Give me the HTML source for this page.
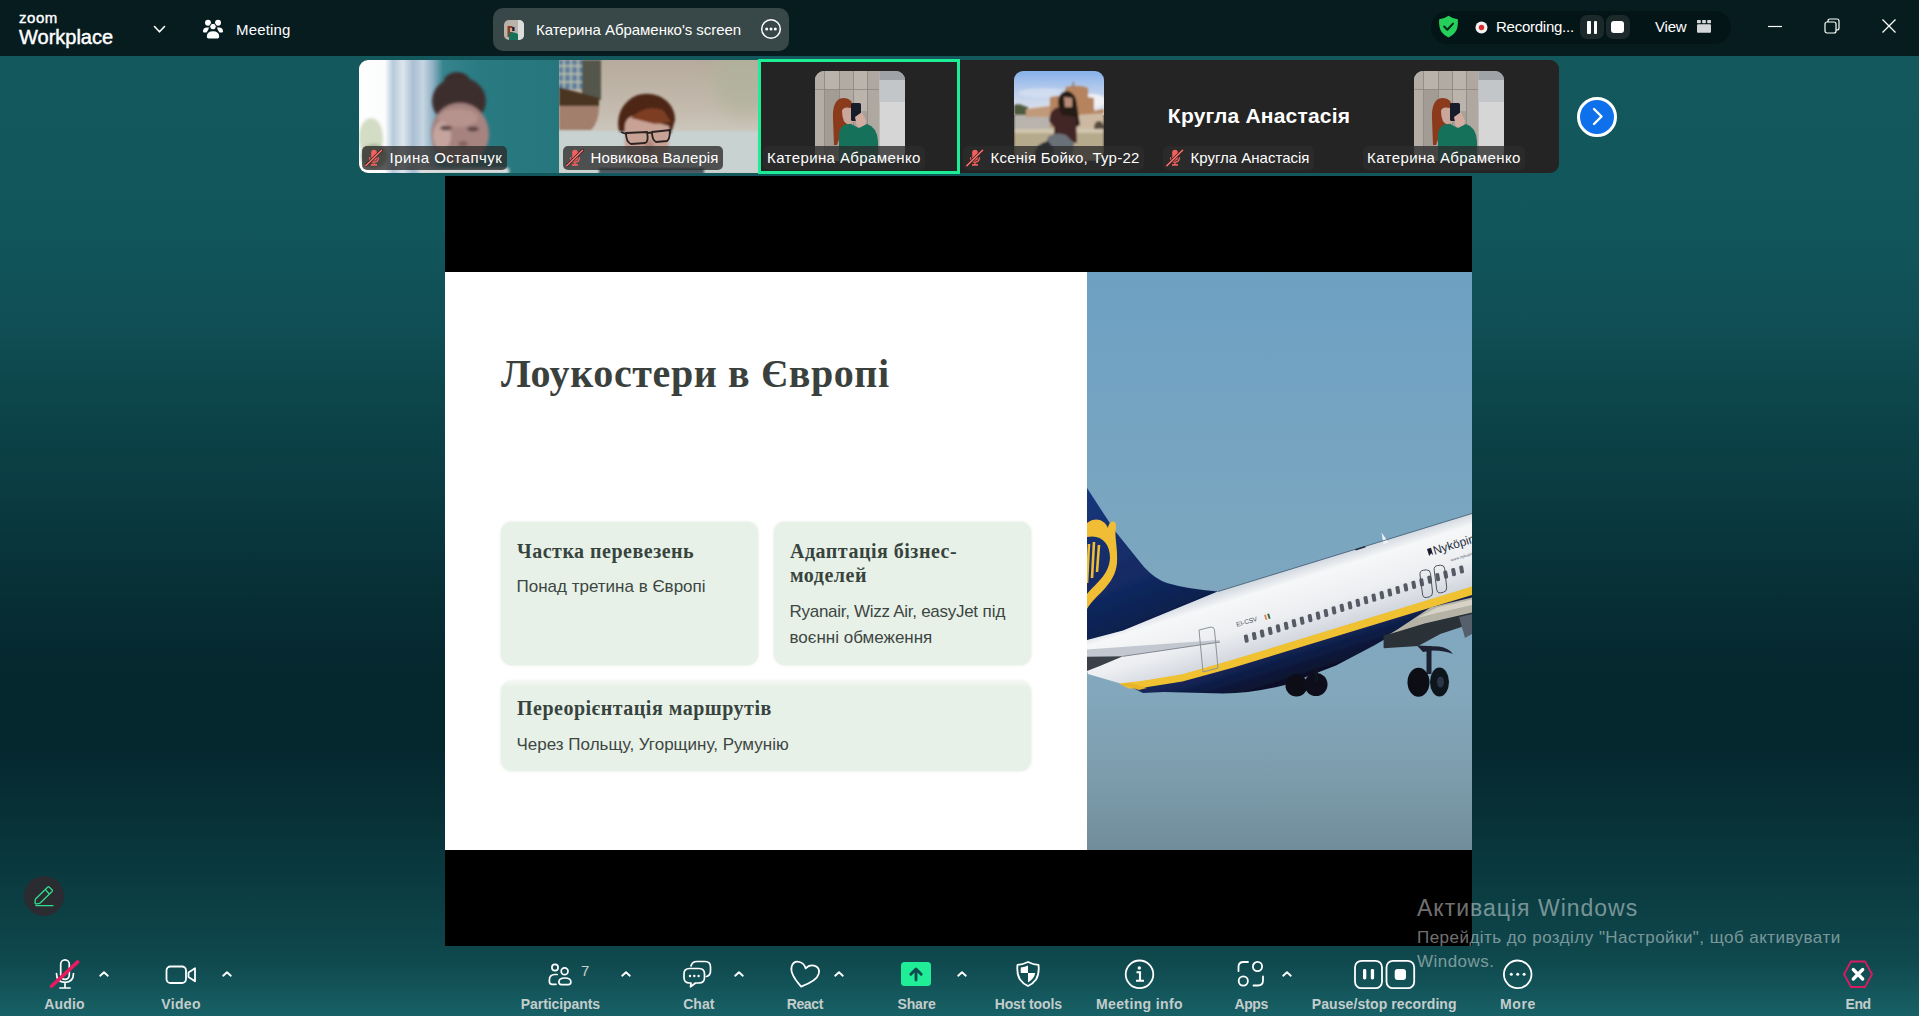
<!DOCTYPE html>
<html lang="uk">
<head>
<meta charset="utf-8">
<title>Zoom Meeting</title>
<style>
*{box-sizing:border-box;margin:0;padding:0}
html,body{width:1919px;height:1016px;overflow:hidden}
body{position:relative;font-family:"Liberation Sans",sans-serif;color:#fff;
 background:linear-gradient(180deg,#12585c 56px,#11565b 230px,#0f4e54 330px,#0c4449 410px,#0a3c42 490px,#083239 565px,#062a31 640px,#05272e 690px,#05282f 750px,#073036 810px,#09393e 870px,#0f484d 960px,#176166 1016px);}
.abs{position:absolute}
/* top bar */
#topbar{position:absolute;left:0;top:0;width:1919px;height:56px;background:#061c1f}
#topbar .t{position:absolute;white-space:nowrap;color:#fff}
/* tiles */
.tile{position:absolute;top:60px;width:200px;height:113px;background:#242424;overflow:hidden}
.lbl{position:absolute;left:4px;top:86px;height:24px;border-radius:5px;background:rgba(44,44,44,.78);color:#fff;font-size:15px;line-height:24px;white-space:nowrap;padding:0 4.5px 0 4px}
.lbl.m{padding-left:27.5px}
.lbl svg{position:absolute;left:3px;top:3px}
.av{position:absolute;left:55px;top:11px;width:90px;height:90px;border-radius:9px;overflow:hidden}
/* share */
#share{position:absolute;left:445px;top:176px;width:1027px;height:770px;background:#000}
#slide{position:absolute;left:0;top:96px;width:642px;height:578px;background:#fff}
#photo{position:absolute;left:642px;top:96px;width:385px;height:578px;overflow:hidden}
.card{position:absolute;background:#e8f1e8;border-radius:11px;box-shadow:0 0 3px rgba(120,150,120,.25)}
.card h3{position:absolute;left:16px;font:bold 20px/24.6px "Liberation Serif",serif;color:#37443e;letter-spacing:.5px;white-space:nowrap}
.card p{position:absolute;left:15.5px;font:17px/25.6px "Liberation Sans",sans-serif;color:#3c4642;white-space:nowrap}
/* toolbar */
.tb{position:absolute;top:995.7px;font-size:14px;font-weight:bold;line-height:16px;color:#c4cccc;white-space:nowrap;transform:translateX(-50%)}
.ico{position:absolute;overflow:visible}
.wm{position:absolute;white-space:nowrap;color:rgba(255,255,255,.46)}
</style>
</head>
<body>

<!-- ===== shared screen ===== -->
<div id="share">
  <div id="slide">
    <div class="abs" id="title" style="left:56px;top:79px;font:bold 40px/46px 'Liberation Serif',serif;color:#3a413d;letter-spacing:.62px;white-space:nowrap">Лоукостери в Європі</div>
    <div class="card" style="left:56px;top:250px;width:257px;height:143px">
      <h3 style="top:16.5px">Частка перевезень</h3>
      <p style="top:52px">Понад третина в Європі</p>
    </div>
    <div class="card" style="left:329px;top:250px;width:257px;height:143px">
      <h3 style="top:16.5px">Адаптація бізнес-<br>моделей</h3>
      <p style="top:77px"><span style="letter-spacing:-.28px">Ryanair, Wizz Air, easyJet</span> під<br>воєнні обмеження</p>
    </div>
    <div class="card" style="left:56px;top:409px;width:530px;height:90px;background:linear-gradient(#f3f8f3 0,#e8f1e8 6px)">
      <h3 style="top:15px">Переорієнтація маршрутів</h3>
      <p style="top:50.5px">Через Польщу, Угорщину, Румунію</p>
    </div>
  </div>
  <div id="photo"><svg width="385" height="578" viewBox="0 0 385 578" style="display:block">
<defs>
<linearGradient id="sky" x1="0" y1="0" x2="0" y2="1">
<stop offset="0" stop-color="#6da0c2"/><stop offset=".33" stop-color="#77a5c1"/><stop offset=".72" stop-color="#83a8bd"/><stop offset=".88" stop-color="#7c9cab"/><stop offset="1" stop-color="#718c9a"/>
</linearGradient>
<linearGradient id="fus" gradientUnits="userSpaceOnUse" x1="250" y1="282" x2="272" y2="352">
<stop offset="0" stop-color="#cfd6de"/><stop offset=".18" stop-color="#f6f7f8"/><stop offset=".6" stop-color="#eceef1"/><stop offset="1" stop-color="#cfd3db"/>
</linearGradient>
<linearGradient id="belly" gradientUnits="userSpaceOnUse" x1="250" y1="360" x2="262" y2="398">
<stop offset="0" stop-color="#142659"/><stop offset="1" stop-color="#050a1c"/>
</linearGradient>
<linearGradient id="fin" gradientUnits="userSpaceOnUse" x1="0" y1="220" x2="60" y2="370">
<stop offset="0" stop-color="#17377c"/><stop offset=".6" stop-color="#122a63"/><stop offset="1" stop-color="#0b1a42"/>
</linearGradient>
<filter id="soft"><feGaussianBlur stdDeviation=".6"/></filter>
</defs>
<rect width="385" height="578" fill="url(#sky)"/>
<g filter="url(#soft)">
<!-- fin -->
<path d="M0,216 L28,259 L57,295 Q68,307 80,311 Q100,317 131,319.5 L36,359 L0,369 Z" fill="url(#fin)"/>
<!-- harp -->
<path d="M0,251 C8,245 17,247 21,256 C22,248 30,247 29,256 C27,263 31,276 30,291 C28,313 9,322 0,337 L0,322 C9,311 22,303 23,286 C23,271 14,262 0,265 Z" fill="#f0bd35"/>
<path d="M2,272 L0,311 M7,270 L5,306 M12,273 L10,300" stroke="#f0bd35" stroke-width="2.6" fill="none"/>
<!-- stabilizer -->

<!-- fuselage -->
<path d="M0,368 L36,358.600 L131,319.500 L385,241.500 L385,315 L146.600,388 L95.400,402.700 L54.400,409.600 L35,412 L1,402 L0,399 Z" fill="url(#fus)"/>
<path d="M0,377.500 L132,368 L133,370 L36,384.500 L0,385 Z" fill="#c3c8d0"/><path d="M0,384.800 L36,384.300 L14,393.500 L0,399 Z" fill="#3a3f48"/>
<path d="M36,384.300 L133,370" stroke="#7a808a" stroke-width=".9"/>
<!-- belly -->
<path d="M40,413 L54.400,414 L146.600,393 L385,320 L385,330 L338,343 L300,366 L287,373.500 L249,393.500 L198,413 Q165,421.500 136,421.500 L77,420 L56,421 Z" fill="url(#belly)"/>
<!-- stripe -->
<path d="M32,411.500 L54.400,409 L95.400,402.200 L146.600,387.500 L385,314.500 L385,323 L146.600,395.500 L95.400,409.600 L54.400,416 L42,416.500 Z" fill="#f0c232"/>
<path d="M33,412 L52,418 L60,416 L44,411 Z" fill="#e8b52c"/>
<!-- wing -->
<path d="M296.600,363.600 L337.500,351 L385,340 L385,351.500 L353.300,362 L331.200,374 L296.600,376.200 Z" fill="#2b3039"/><path d="M302.900,362 L310.700,357.300 L343.800,335.300 L385,325.500 L385,340.500 L337.500,351.500 Z" fill="#b5b2a6"/>
<path d="M330,346 L350,335.500 L385,327.500 L385,333 L350,341 Z" fill="#d6d3c6"/><path d="M372,345 L385,342 L385,362 L378,366 Z" fill="#56606c"/>
<!-- gear -->
<path d="M339.500,374 L344.500,374 L344.500,402 L339.500,402 Z M330,373.500 L352,374.500 Q362,376 366,382 Q358,378.500 346,378.500 L336,380 Z" fill="#1a2030"/>
<circle cx="209.5" cy="413.5" r="11" fill="#0c0f17"/><circle cx="229" cy="412.5" r="11.5" fill="#0e111a"/>
<path d="M228,396 L231,396 L231,410 L228,410 Z" fill="#10131c"/>
<ellipse cx="331.500" cy="410.300" rx="11" ry="14.500" fill="#0b0e15"/><ellipse cx="352.500" cy="410" rx="9.500" ry="14.500" fill="#11151f"/><ellipse cx="353.500" cy="410" rx="3.500" ry="5.500" fill="#2c3446"/>
</g>
<!-- windows -->
<g fill="#555a64">
<rect x="157.3" y="362.6" width="4" height="8" rx="1.4" transform="rotate(-10 159.3 366.6)"/>
<rect x="165.3" y="360.0" width="4" height="8" rx="1.4" transform="rotate(-10 167.3 364.0)"/>
<rect x="173.2" y="357.5" width="4" height="8" rx="1.4" transform="rotate(-10 175.2 361.5)"/>
<rect x="181.2" y="354.9" width="4" height="8" rx="1.4" transform="rotate(-10 183.2 358.9)"/>
<rect x="189.2" y="352.4" width="4" height="8" rx="1.4" transform="rotate(-10 191.2 356.4)"/>
<rect x="197.2" y="349.8" width="4" height="8" rx="1.4" transform="rotate(-10 199.2 353.8)"/>
<rect x="205.1" y="347.2" width="4" height="8" rx="1.4" transform="rotate(-10 207.1 351.2)"/>
<rect x="213.1" y="344.7" width="4" height="8" rx="1.4" transform="rotate(-10 215.1 348.7)"/>
<rect x="221.1" y="342.1" width="4" height="8" rx="1.4" transform="rotate(-10 223.1 346.1)"/>
<rect x="229.1" y="339.6" width="4" height="8" rx="1.4" transform="rotate(-10 231.1 343.6)"/>
<rect x="237.0" y="337.0" width="4" height="8" rx="1.4" transform="rotate(-10 239.0 341.0)"/>
<rect x="245.0" y="334.4" width="4" height="8" rx="1.4" transform="rotate(-10 247.0 338.4)"/>
<rect x="253.0" y="331.9" width="4" height="8" rx="1.4" transform="rotate(-10 255.0 335.9)"/>
<rect x="261.0" y="329.3" width="4" height="8" rx="1.4" transform="rotate(-10 263.0 333.3)"/>
<rect x="268.9" y="326.8" width="4" height="8" rx="1.4" transform="rotate(-10 270.9 330.8)"/>
<rect x="276.9" y="324.2" width="4" height="8" rx="1.4" transform="rotate(-10 278.9 328.2)"/>
<rect x="284.9" y="321.7" width="4" height="8" rx="1.4" transform="rotate(-10 286.9 325.7)"/>
<rect x="292.9" y="319.1" width="4" height="8" rx="1.4" transform="rotate(-10 294.9 323.1)"/>
<rect x="300.8" y="316.5" width="4" height="8" rx="1.4" transform="rotate(-10 302.8 320.5)"/>
<rect x="308.8" y="314.0" width="4" height="8" rx="1.4" transform="rotate(-10 310.8 318.0)"/>
<rect x="316.8" y="311.4" width="4" height="8" rx="1.4" transform="rotate(-10 318.8 315.4)"/>
<rect x="324.8" y="308.9" width="4" height="8" rx="1.4" transform="rotate(-10 326.8 312.9)"/>
<rect x="332.7" y="306.3" width="4" height="8" rx="1.4" transform="rotate(-10 334.7 310.3)"/>
<rect x="340.7" y="303.7" width="4" height="8" rx="1.4" transform="rotate(-10 342.7 307.7)"/>
<rect x="348.7" y="301.2" width="4" height="8" rx="1.4" transform="rotate(-10 350.7 305.2)"/>
<rect x="356.7" y="298.6" width="4" height="8" rx="1.4" transform="rotate(-10 358.7 302.6)"/>
<rect x="364.6" y="296.1" width="4" height="8" rx="1.4" transform="rotate(-10 366.6 300.1)"/>
<rect x="372.6" y="293.5" width="4" height="8" rx="1.4" transform="rotate(-10 374.6 297.5)"/>
</g>
<!-- doors -->
<path d="M112,358 L124,355 Q127,355 127.5,358 L131,396 L116,400 Z" fill="none" stroke="#8d929b" stroke-width="1"/>
<path d="M333,303 Q332.500,298.700 336.500,298.200 L339.500,297.900 Q343,297.700 343.500,301.500 L345.500,320 Q345.800,324 342.500,324.800 L339.500,325.500 Q336,326 335.500,322 Z M347.200,298.300 Q346.700,294 350.700,293.500 L353.700,293.200 Q357.200,293 357.700,296.800 L359.700,315.300 Q360,319.300 356.700,320.100 L353.700,320.800 Q350.200,321.300 349.700,317.300 Z" fill="none" stroke="#4d525d" stroke-width="1"/>
<path d="M294.500,260.500 L301.500,270.500 L296.500,272.200 Z" fill="#eef2f6"/><path d="M131,319.500 L385,241.500" stroke="#3f5870" stroke-width=".8" fill="none"/><path d="M268,277.200 l10,-3.100 l.8,1.200 l-10,3.200z" fill="#1c2a3a"/>
<g font-family="'Liberation Sans',sans-serif" fill="#4a4f5a">
<text x="150" y="355" font-size="6.5" transform="rotate(-17 150 355)">EI-CSV</text>
<text x="347.500" y="282.700" font-size="12" fill="#262d3d" transform="rotate(-17 347.500 282.700)">Nyköping</text><text x="364" y="289.500" font-size="4" fill="#5a6070" transform="rotate(-17 364 289.500)">www.nykoping.se</text><path d="M340,277 l4,-1.300 l2.200,7.500 l-2,-2 l-2,2.800z" fill="#161c30"/>
</g>
<path d="M177,343 l1.8,-.6 l1.6,5 l-1.8,.6z" fill="#e08a4a"/><path d="M180.2,342 l1.8,-.6 l1.6,5 l-1.8,.6z" fill="#2d6a4a"/>
</svg>
</div>
</div>

<!-- ===== top bar ===== -->
<div id="topbar">  <div class="t" style="left:19px;top:10px;font:15px/16px 'Liberation Sans',sans-serif;letter-spacing:.55px;-webkit-text-stroke:.4px #fff">zoom</div>
  <div class="t" style="left:19px;top:24.7px;font:20px/24px 'Liberation Sans',sans-serif;-webkit-text-stroke:.45px #fff">Workplace</div>
  <svg class="ico" style="left:152.7px;top:25.3px" width="13" height="9" viewBox="0 0 13 9"><path d="M1.5,1.5 L6.5,6.8 L11.5,1.5" fill="none" stroke="#fff" stroke-width="1.6" stroke-linecap="round" stroke-linejoin="round"/></svg>
  <svg class="ico" style="left:202px;top:18px" width="22" height="22" viewBox="0 0 22 22" fill="#fff">
    <circle cx="6" cy="4.8" r="3"/><circle cx="16" cy="4.8" r="3"/><circle cx="11" cy="8.6" r="3.3" stroke="#061c1f" stroke-width="1"/>
    <path d="M1,13.5 Q1,9.5 5,9.5 L7,9.5 Q6.5,12 4.5,14.5 L2,14.5 Q1,14.5 1,13.5Z M21,13.5 Q21,9.5 17,9.5 L15,9.5 Q15.500,12 17.5,14.5 L20,14.500 Q21,14.5 21,13.500Z"/>
    <path d="M4.8,18.800 Q4.800,13.300 11,13.300 Q17.200,13.300 17.200,18.800 Q17.200,20.500 15.500,20.500 L6.500,20.500 Q4.800,20.500 4.800,18.800Z"/>
  </svg>
  <div class="t" style="left:236px;top:20.5px;font:15px/18px 'Liberation Sans',sans-serif;letter-spacing:.15px">Meeting</div>

  <div class="abs" style="left:493px;top:8px;width:296px;height:43px;border-radius:10px;background:#384848"></div>
  <svg class="ico" style="left:504px;top:20px" width="20" height="20" viewBox="0 0 20 20"><defs><clipPath id="avc"><rect width="20" height="20" rx="5"/></clipPath></defs><g clip-path="url(#avc)"><rect width="20" height="20" fill="#b9b2aa"/><rect x="14" width="6" height="20" fill="#dcdcdc"/><rect x="3.500" y="6" width="5" height="11" fill="#8a3c1e"/><rect x="6" y="8" width="3.500" height="4" fill="#c9a59a"/><rect x="8.200" y="7" width="2.300" height="4" fill="#151a2c"/><path d="M5,20 L5,13 Q9,11 14,14 L14,20Z" fill="#17705a"/></g></svg>
  <div class="t" id="scr" style="left:536px;top:20.700px;font:15px/18px 'Liberation Sans',sans-serif;letter-spacing:-.04px">Катерина Абраменко's screen</div>
  <svg class="ico" style="left:760px;top:18px" width="22" height="22" viewBox="0 0 22 22"><circle cx="11" cy="11" r="9.3" fill="none" stroke="#fff" stroke-width="1.500"/><circle cx="6.700" cy="11" r="1.500" fill="#fff"/><circle cx="11" cy="11" r="1.500" fill="#fff"/><circle cx="15.300" cy="11" r="1.500" fill="#fff"/></svg>

  <div class="abs" style="left:1431px;top:11px;width:300px;height:33px;border-radius:16.500px;background:#041517"></div>
  <svg class="ico" style="left:1438px;top:15px" width="21" height="23" viewBox="0 0 21 23"><path d="M10.500,0.800 Q14,3.600 19.800,4.200 Q20.600,13 17,17.500 Q14.500,20.800 10.500,22.500 Q6.500,20.800 4,17.500 Q0.400,13 1.200,4.200 Q7,3.600 10.500,0.800Z" fill="#25d05a"/><path d="M6.200,11.600 L9.300,14.700 L15,8.600" fill="none" stroke="#0b2a1c" stroke-width="2.100" stroke-linecap="round" stroke-linejoin="round"/></svg>
  <svg class="ico" style="left:1474.700px;top:20.500px" width="13" height="13" viewBox="0 0 13 13"><circle cx="6.500" cy="6.500" r="6" fill="#f3f3f3"/><circle cx="6.500" cy="6.500" r="2.700" fill="#dc2c2c"/></svg>
  <div class="t" style="left:1496px;top:17.8px;font:15px/18px 'Liberation Sans',sans-serif;letter-spacing:-.25px">Recording...</div>
  <div class="abs" style="left:1580px;top:15px;width:24px;height:24px;border-radius:7px;background:#1c292b"></div>
  <div class="abs" style="left:1587px;top:20.500px;width:3.500px;height:13.500px;border-radius:1px;background:#fff"></div>
  <div class="abs" style="left:1593.500px;top:20.500px;width:3.500px;height:13.500px;border-radius:1px;background:#fff"></div>
  <div class="abs" style="left:1605.500px;top:15px;width:24px;height:24px;border-radius:7px;background:#1c292b"></div>
  <div class="abs" style="left:1611px;top:20.500px;width:12.500px;height:12.500px;border-radius:3px;background:#fff"></div>
  <div class="t" style="left:1655px;top:17.8px;font:15px/18px 'Liberation Sans',sans-serif;letter-spacing:-.2px">View</div>
  <svg class="ico" style="left:1696.500px;top:20px" width="14" height="13" viewBox="0 0 14 13" fill="#d3d6d6"><rect x="0" y="0" width="3.800" height="3.200" rx=".6"/><rect x="5.100" y="0" width="3.800" height="3.200" rx=".6"/><rect x="10.200" y="0" width="3.800" height="3.200" rx=".6"/><rect x="0" y="4.300" width="14" height="8.500" rx="1"/></svg>

  <svg class="ico" style="left:1767px;top:18px" width="16" height="16" viewBox="0 0 16 16"><path d="M1,8.500 L15,8.500" stroke="#fff" stroke-width="1.200"/></svg>
  <svg class="ico" style="left:1824px;top:18px" width="16" height="16" viewBox="0 0 16 16" fill="none" stroke="#fff" stroke-width="1.200"><rect x="1" y="4" width="11" height="11" rx="2"/><path d="M4,4 L4,3 Q4,1 6,1 L13,1 Q15,1 15,3 L15,10 Q15,12 13,12 L12,12"/></svg>
  <svg class="ico" style="left:1881px;top:18px" width="16" height="16" viewBox="0 0 16 16"><path d="M1.500,1.500 L14.500,14.500 M14.500,1.500 L1.500,14.500" stroke="#fff" stroke-width="1.300"/></svg>
</div>

<!-- ===== tiles ===== -->
<svg width="0" height="0" style="position:absolute"><defs>
<filter id="b1" x="-10%" y="-10%" width="120%" height="120%"><feGaussianBlur stdDeviation="1.6"/></filter>
<filter id="b2" x="-10%" y="-10%" width="120%" height="120%"><feGaussianBlur stdDeviation=".9"/></filter>
<filter id="b4" x="-50%" y="-50%" width="200%" height="200%"><feGaussianBlur stdDeviation="9"/></filter>
<filter id="b3" x="-10%" y="-10%" width="120%" height="120%"><feGaussianBlur stdDeviation=".5"/></filter>
<symbol id="micoff" viewBox="0 0 18 18"><rect x="6.200" y=".800" width="5.600" height="11" rx="2.800" fill="#f0605d"/><path d="M4.600,8.600 Q4.600,13.300 9,13.300 Q13.400,13.300 13.400,8.600 M9,13 L9,15.400" fill="none" stroke="#f0605d" stroke-width="1.300" stroke-linecap="round"/><path d="M6,15.900 L12,15.900" stroke="#f0605d" stroke-width="1.700"/><path d="M.8,16.800 L16.600,1.200" stroke="#4a1d1d" stroke-width="3" stroke-linecap="round"/><path d="M.8,16.800 L16.600,1.200" stroke="#f47f7b" stroke-width="1.300" stroke-linecap="round"/></symbol>
<symbol id="selfie" viewBox="0 0 90 90">
 <rect width="90" height="90" fill="#aaa39b"/>
 <g filter="url(#b3)">
 <rect x="0" y="0" width="9" height="90" fill="#b4ada6"/><rect x="10" y="0" width="14" height="18" fill="#b9b3ac"/><rect x="10" y="19" width="14" height="71" fill="#a39c95"/><rect x="25" y="0" width="13" height="90" fill="#b2aba4"/><rect x="39" y="0" width="13" height="40" fill="#bab4ad"/><rect x="39" y="41" width="13" height="49" fill="#a8a19a"/><rect x="53" y="0" width="11" height="90" fill="#afa8a1"/>
 <path d="M9.500,0V90M24.500,0V90M38.500,0V90M52.500,0V90M0,18.500H64" stroke="#8c867f" stroke-width=".8" fill="none"/>
 <rect x="64.500" y="0" width="25.500" height="90" fill="#d6d6d6"/><rect x="64.500" y="0" width="25.500" height="9" fill="#9fa3a7"/><rect x="64.500" y="9" width="25.500" height="22" fill="#c3c6c8"/>
 <path d="M18,48 Q17,27 29,27 Q38,27 38,38 L36,56 L27,60 L22,74 L19,74 Z" fill="#8b3b1d"/>
 <path d="M27,40 Q28,35 36,37 L40,50 L34,54 Q27,52 27,40Z" fill="#cba69a"/>
 <rect x="36" y="32" width="10" height="18" rx="1.500" fill="#141a2c"/>
 <path d="M40,46 L47,41 L51,50 L49,58 L42,56Z" fill="#d2ad9f"/>
 <path d="M24,62 Q26,52 36,53 L44,57 L52,53 Q62,56 63,70 L63,90 L24,90Z" fill="#17715a"/>
 </g>
</symbol>
</defs></svg>

<!-- tile 1 -->
<div class="tile" style="left:359px;border-radius:9px 0 0 9px">
 <svg width="200" height="113" viewBox="0 0 200 113" style="display:block">
  <defs><linearGradient id="t1bg" x1="0" y1="0" x2="1" y2="0"><stop offset="0" stop-color="#ffffff"/><stop offset=".13" stop-color="#fbfcfd"/><stop offset=".17" stop-color="#b8cadb"/><stop offset=".22" stop-color="#dde6ee"/><stop offset=".27" stop-color="#a9bfd2"/><stop offset=".32" stop-color="#c6d5e2"/><stop offset=".37" stop-color="#8fb0c4"/><stop offset=".42" stop-color="#36858e"/><stop offset=".6" stop-color="#2a7a82"/><stop offset="1" stop-color="#26767d"/></linearGradient></defs>
  <rect width="200" height="113" fill="url(#t1bg)"/>
  <g filter="url(#b1)">
   <ellipse cx="12" cy="78" rx="12" ry="20" fill="#d3dcc4"/><ellipse cx="15" cy="96" rx="13" ry="12" fill="#a9b596"/>
   <ellipse cx="98" cy="21" rx="13" ry="9" fill="#3a2b2c"/>
   <ellipse cx="100" cy="41" rx="27" ry="24" fill="#3e2d2d"/>
   <ellipse cx="101" cy="74" rx="29" ry="31" fill="#a6837f"/>
   <ellipse cx="99" cy="58" rx="20" ry="9" fill="#b7938d"/>
   <ellipse cx="83" cy="76" rx="9" ry="14" fill="#cfafa8" opacity=".75"/>
   <ellipse cx="87" cy="68" rx="6" ry="2.600" fill="#5a4443"/><ellipse cx="114" cy="69" rx="6" ry="2.600" fill="#5a4443"/>
   <ellipse cx="104" cy="84" rx="5" ry="3" fill="#86635f"/>
   <rect x="60" y="108" width="90" height="6" fill="#ddd"/>
  </g>
 </svg>
 <div class="lbl m" style="left:3px;letter-spacing:.5px"><svg width="18" height="18"><use href="#micoff"/></svg>Ірина Остапчук</div>
</div>

<!-- tile 2 -->
<div class="tile" style="left:559px;width:199px">
 <svg width="200" height="113" viewBox="0 0 200 113" style="display:block">
  <defs><linearGradient id="t2bg" x1="0" y1="0" x2="0" y2="1"><stop offset="0" stop-color="#b6ab9d"/><stop offset=".4" stop-color="#c3b9ac"/><stop offset=".63" stop-color="#ccc6bc"/></linearGradient></defs><rect width="200" height="113" fill="url(#t2bg)"/>
  <ellipse cx="185" cy="22" rx="30" ry="34" fill="#aeb39b" opacity=".7" filter="url(#b4)"/>
  <g filter="url(#b2)">
   <rect x="0" y="71" width="200" height="42" fill="#c7d2d1"/>
   
   <rect x="0" y="0" width="24" height="29" fill="#5f7f9e"/>
   <path d="M0,6H24M0,14H24M0,22H24M5,0V29M12,0V29M19,0V29" stroke="#d8d6b0" stroke-width="1.500" opacity=".8"/>
   <rect x="23" y="0" width="19" height="40" fill="#55574c"/>
   <path d="M0,27 L40,38 L40,46 L0,46Z" fill="#4a3423"/>
   <path d="M0,46 L40,46 Q40,62 32,70 L0,70Z" fill="#a27e6c"/>
   <path d="M60,72 Q56,52 70,40 Q82,30 100,36 Q116,44 116,60 L112,74Z" fill="#4d2617"/>
   <path d="M66,74 Q64,58 74,56 L96,62 L110,66 Q112,90 104,104 L70,104 Q64,90 66,74Z" fill="#c8a395"/>
   <path d="M72,58 Q86,44 104,50 L112,62 L96,64Z" fill="#7d3e23"/>
   <ellipse cx="90" cy="86" rx="5" ry="6" fill="#b58a7e"/>
  </g>
  <path d="M67,73 L88,72 Q90,82 86,83 L72,84 Q67,82 67,73Z M93,72 L111,70 Q111,79 108,81 L97,82 Q93,80 93,72Z M88,73 L93,72.500 M67,74 L62,72" fill="none" stroke="#2a2320" stroke-width="1.800"/>
  <rect x="40" y="108" width="105" height="6" fill="#4a5560" filter="url(#b2)"/>
 </svg>
 <div class="lbl m" style="left:4px;letter-spacing:.12px"><svg width="18" height="18"><use href="#micoff"/></svg>Новикова Валерія</div>
</div>

<!-- tile 3 (active) -->
<div class="tile" style="left:758px;top:59px;width:202px;height:115px;border:3px solid #1cee96;background:#242424">
 <div class="av" style="left:54px;top:9px"><svg width="90" height="90"><use href="#selfie"/></svg></div>
 <div class="lbl" style="left:2px;top:84px;letter-spacing:.4px">Катерина Абраменко</div>
</div>

<!-- tile 4 -->
<div class="tile" style="left:960px;width:199px">
 <div class="av" style="left:54px"><svg width="90" height="90" viewBox="0 0 90 90">
  <defs><linearGradient id="sk4" x1="0" y1="0" x2="0" y2="1"><stop offset="0" stop-color="#86b1ea"/><stop offset=".45" stop-color="#b9cdec"/><stop offset="1" stop-color="#e6e6ea"/></linearGradient></defs>
  <rect width="90" height="44" fill="url(#sk4)"/>
  <g filter="url(#b2)">
  <ellipse cx="30" cy="22" rx="26" ry="5" fill="#d5def0" opacity=".8"/><ellipse cx="78" cy="30" rx="14" ry="7" fill="#eef0f4"/>
  <rect x="0" y="43" width="90" height="47" fill="#b6aa8c"/>
  <rect x="0" y="44" width="36" height="15" fill="#b9b3ad"/>
  <path d="M0,34 Q6,32 10,35 L14,36 L14,44 L0,44Z" fill="#4d5a3c"/>
  <path d="M12,38 L36,35 L36,46 L12,46Z" fill="#c19a7c"/>
  <path d="M36,26 L50,24 L52,16 Q64,13 74,17 L74,26 L80,27 L80,40 L90,38 L90,56 L36,56Z" fill="#b6835f"/>
  <rect x="58.500" y="11" width="1.600" height="6" fill="#8a7a72"/>
  <path d="M62,44 L90,42 L90,58 L62,58Z" fill="#cdb9a2"/>
  <path d="M80,58 Q80,50 85,50 Q90,50 90,58Z" fill="#5a4c40"/>
  <rect x="0" y="58" width="90" height="4" fill="#d0c6ae"/>
  <path d="M44,30 Q46,19 54,20 Q62,22 63,34 L66,54 L58,58 L46,50Z" fill="#271a18"/>
  <path d="M50,26 L58,27 L58,36 L51,36Z" fill="#b98c78"/>
  <path d="M35,50 Q36,38 44,36 L48,44 L62,46 L63,72 L40,68 L40,56Z" fill="#432825"/>
  <path d="M34,66 Q42,60 52,64 L60,72 L58,90 L36,90 L30,78Z" fill="#6b7078"/>
  <path d="M20,84 Q22,72 34,70 L40,78 L38,90 L20,90Z" fill="#2c2e34"/>
  </g>
 </svg></div>
 <div class="lbl m" style="left:3px;letter-spacing:.25px"><svg width="18" height="18"><use href="#micoff"/></svg>Ксенія Бойко, Тур-22</div>
</div>

<!-- tile 5 -->
<div class="tile" style="left:1159px">
 <div class="abs" style="left:0;width:200px;top:43.5px;text-align:center;font:bold 21px/24px 'Liberation Sans',sans-serif;letter-spacing:.2px;white-space:nowrap">Кругла Анастасія</div>
 <div class="lbl m" style="left:4px;letter-spacing:0px"><svg width="18" height="18"><use href="#micoff"/></svg>Кругла Анастасія</div>
</div>

<!-- tile 6 -->
<div class="tile" style="left:1359px;border-radius:0 9px 9px 0">
 <div class="av"><svg width="90" height="90"><use href="#selfie"/></svg></div>
 <div class="lbl" style="left:4px;letter-spacing:.4px">Катерина Абраменко</div>
</div>

<!-- next -->
<div class="abs" style="left:1576.500px;top:96.500px;width:40px;height:40px;border-radius:50%;background:#0e71eb;border:3.500px solid #fff"></div>
<svg class="ico" style="left:1589px;top:106px" width="16" height="21" viewBox="0 0 16 21"><path d="M5,3 L12.500,10.500 L5,18" fill="none" stroke="#fff" stroke-width="2.400" stroke-linecap="round" stroke-linejoin="round"/></svg>


<!-- ===== toolbar ===== -->
<svg width="0" height="0" style="position:absolute"><defs>
<symbol id="chev" viewBox="0 0 12 8"><path d="M2.200,5.700 L6,2.200 L9.800,5.700" fill="none" stroke="#fff" stroke-width="1.900" stroke-linecap="round" stroke-linejoin="round"/></symbol>
</defs></svg>

<!-- pencil -->
<div class="abs" style="left:24px;top:876px;width:40px;height:40px;border-radius:50%;background:#2a2c31"></div>
<svg class="ico" style="left:34px;top:886px" width="20" height="21" viewBox="0 0 20 21" fill="none" stroke="#30de8a" stroke-width="1.300" stroke-linejoin="round" stroke-linecap="round"><path d="M13.600,1.200 Q14.400,.4 15.300,1.200 L18,3.700 Q18.900,4.600 18.100,5.500 L6.200,17 Q5.600,17.500 4.800,17.600 L2.200,17.900 Q1.100,18 1.100,16.900 L1.200,14.200 Q1.200,13.400 1.800,12.800 Z M11.300,3.600 L14.900,7.500"/><path d="M1.800,19.600 L19,19.600" stroke-width="1.200"/></svg>

<!-- Audio -->
<svg class="ico" style="left:48px;top:957px" width="34" height="34" viewBox="0 0 34 34" fill="none" stroke="#fff" stroke-width="1.700" stroke-linecap="round"><rect x="12.700" y="2.800" width="8.600" height="19.500" rx="4.300"/><path d="M8.500,16.500 Q8.500,25.300 17,25.300 Q25.500,25.300 25.500,16.500 M17,25.500 L17,30.500 M12,31 L22,31"/><path d="M3.500,29.200 L29.700,4.900" stroke="#ea1a5c" stroke-width="3.600"/></svg>
<svg class="ico" style="left:98px;top:970px" width="12" height="8"><use href="#chev"/></svg>
<div class="tb" style="left:64.5px;letter-spacing:0.17px">Audio</div>

<!-- Video -->
<svg class="ico" style="left:164px;top:964px" width="34" height="22" viewBox="0 0 34 22" fill="none" stroke="#fff" stroke-width="1.800" stroke-linejoin="round"><rect x="2.500" y="2.500" width="19.500" height="16.500" rx="4"/><path d="M24.500,8.500 L31,4.200 L31,17.300 L24.500,13 Z"/></svg>
<svg class="ico" style="left:220.500px;top:970px" width="12" height="8"><use href="#chev"/></svg>
<div class="tb" style="left:181.1px;letter-spacing:0.32px">Video</div>

<!-- Participants -->
<svg class="ico" style="left:547px;top:962px" width="26" height="25" viewBox="0 0 26 25" fill="none" stroke="#fff" stroke-width="1.700" stroke-linecap="round"><circle cx="8" cy="5.500" r="3.100"/><circle cx="17.600" cy="9.300" r="3.400"/><path d="M10.200,12.500 L8,12.500 Q2.400,12.500 2.400,18 L2.400,19.500 Q2.400,22.300 5.200,22.300 L9,22.300"/><path d="M11.900,20 Q11.900,16 17.900,16 Q23.900,16 23.900,20 Q23.900,22.600 21.300,22.600 L14.500,22.600 Q11.900,22.600 11.900,20 Z"/></svg>
<div class="abs" style="left:581px;top:962.300px;font:15px/18px 'Liberation Sans',sans-serif;color:#c8cfcf">7</div>
<svg class="ico" style="left:620px;top:970px" width="12" height="8"><use href="#chev"/></svg>
<div class="tb" style="left:560.4px;letter-spacing:-0.09px">Participants</div>

<!-- Chat -->
<svg class="ico" style="left:682px;top:959px" width="31" height="30" viewBox="0 0 31 30" fill="none" stroke="#fff" stroke-width="1.700" stroke-linejoin="round" stroke-linecap="round"><path d="M9,7 Q10,2.500 15,2.500 L23,2.500 Q28.500,2.500 28.500,8 L28.500,12 Q28.500,16.500 24.500,17.500"/><path d="M7.500,9.500 L17,9.500 Q22.500,9.500 22.500,15 L22.500,18.500 Q22.500,24 17,24 L13.500,24 L8.500,27.800 L9,24 L7.500,24 Q2,24 2,18.500 L2,15 Q2,9.500 7.500,9.500Z"/><g fill="#fff" stroke="none"><circle cx="8" cy="17" r="1.200"/><circle cx="12.300" cy="17" r="1.200"/><circle cx="16.600" cy="17" r="1.200"/></g></svg>
<svg class="ico" style="left:733px;top:970px" width="12" height="8"><use href="#chev"/></svg>
<div class="tb" style="left:698.8px;letter-spacing:0px">Chat</div>

<!-- React -->
<svg class="ico" style="left:786.500px;top:959.500px" width="34" height="30" viewBox="0 0 34 30" fill="none" stroke="#fff" stroke-width="1.700" stroke-linejoin="round"><path transform="rotate(14 17 15)" d="M17,27 Q3,17.500 3,10.300 Q3,3.500 9.500,3.500 Q14.500,3.500 17,8.300 Q19.500,3.500 24.500,3.500 Q31,3.500 31,10.300 Q31,17.500 17,27Z"/></svg>
<svg class="ico" style="left:833px;top:970px" width="12" height="8"><use href="#chev"/></svg>
<div class="tb" style="left:804.8px;letter-spacing:-0.37px">React</div>

<!-- Share -->
<div class="abs" style="left:901px;top:962px;width:30px;height:24px;border-radius:3.500px;background:#20ee97"></div>
<svg class="ico" style="left:908px;top:966px" width="16" height="16" viewBox="0 0 16 16" fill="none" stroke="#0e4a4f" stroke-width="2.900" stroke-linecap="round" stroke-linejoin="round"><path d="M8,14 L8,4.500 M2.800,8.200 L8,3 L13.200,8.200"/></svg>
<svg class="ico" style="left:955.500px;top:970px" width="12" height="8"><use href="#chev"/></svg>
<div class="tb" style="left:916.6px;letter-spacing:-0.12px">Share</div>

<!-- Host tools -->
<svg class="ico" style="left:1015px;top:960px" width="26" height="28" viewBox="0 0 26 28"><path d="M13,2 Q18,4.500 23.500,4.800 Q24.500,14 21,19.500 Q18,23.800 13,26 Q8,23.800 5,19.500 Q1.500,14 2.500,4.800 Q8,4.500 13,2Z" fill="none" stroke="#fff" stroke-width="1.800" stroke-linejoin="round"/><path d="M13,5.500 L13,13 L5.800,13 Q5.500,10 5.800,7.500 Q10,7 13,5.500Z M13,13 L20.200,13 Q19.500,18.500 13,22.500Z" fill="#fff"/></svg>
<div class="tb" style="left:1028.3px;letter-spacing:-0.12px">Host tools</div>

<!-- Meeting info -->
<svg class="ico" style="left:1124px;top:959px" width="31" height="31" viewBox="0 0 31 31" fill="none" stroke="#fff"><circle cx="15.500" cy="15.300" r="13.800" stroke-width="1.800"/><circle cx="15.300" cy="9" r="1.700" fill="#fff" stroke="none"/><path d="M12.500,13.300 L16,13.300 L16,21.500 M12,21.800 L20,21.800" stroke-width="2.100"/></svg>
<div class="tb" style="left:1139.5px;letter-spacing:0.38px">Meeting info</div>

<!-- Apps -->
<svg class="ico" style="left:1236px;top:959px" width="30" height="30" viewBox="0 0 30 30" fill="none" stroke="#fff" stroke-width="1.800" stroke-linecap="round"><path d="M2.500,12 L2.500,8 Q2.500,3 7.500,3 L12,3"/><circle cx="21.500" cy="7.500" r="4.600"/><circle cx="7.300" cy="22" r="4.600"/><path d="M27,17.500 L27,21.500 Q27,26.500 22,26.500 L17.500,26.500"/></svg>
<svg class="ico" style="left:1280.500px;top:970px" width="12" height="8"><use href="#chev"/></svg>
<div class="tb" style="left:1251.2px;letter-spacing:-0.42px">Apps</div>

<!-- Pause/stop -->
<svg class="ico" style="left:1353px;top:959px" width="64" height="31" viewBox="0 0 64 31" fill="none" stroke="#fff" stroke-width="1.800"><rect x="2" y="1.800" width="27" height="27.400" rx="6.500"/><rect x="33.500" y="1.800" width="27.700" height="27.400" rx="6.500"/><g fill="#fff" stroke="none"><rect x="10" y="10" width="3.300" height="10.500" rx="1.400"/><rect x="17.800" y="10" width="3.300" height="10.500" rx="1.400"/><rect x="41.700" y="10" width="11.300" height="11" rx="3"/></g></svg>
<div class="tb" style="left:1384.2px;letter-spacing:0.09px">Pause/stop recording</div>

<!-- More -->
<svg class="ico" style="left:1502px;top:959px" width="31" height="31" viewBox="0 0 31 31"><circle cx="15.700" cy="15.300" r="13.800" fill="none" stroke="#fff" stroke-width="1.800"/><g fill="#fff"><circle cx="9.300" cy="15.300" r="1.500"/><circle cx="15.700" cy="15.300" r="1.500"/><circle cx="22.100" cy="15.300" r="1.500"/></g></svg>
<div class="tb" style="left:1518px;letter-spacing:0.64px">More</div>

<!-- End -->
<svg class="ico" style="left:1842px;top:959px" width="32" height="31" viewBox="0 0 32 31"><path d="M9,2.500 L23,2.500 L30,15.300 L23,28 L9,28 L2,15.300 Z" fill="none" stroke="#d91c62" stroke-width="1.800" stroke-linejoin="round"/><path d="M11.300,10.500 L20.700,20 M20.700,10.500 L11.300,20" stroke="#fff" stroke-width="3.300" stroke-linecap="round"/></svg>
<div class="tb" style="left:1858.1px;letter-spacing:-0.5px">End</div>

<!-- watermark -->
<div class="wm" style="left:1417px;top:893.8px;font:23px/28px 'Liberation Sans',sans-serif;letter-spacing:1px">Активація Windows</div>
<div class="wm" style="left:1417px;top:926px;font:17px/24.300px 'Liberation Sans',sans-serif;letter-spacing:.46px">Перейдіть до розділу "Настройки", щоб активувати<br>Windows.</div>


</body>
</html>
